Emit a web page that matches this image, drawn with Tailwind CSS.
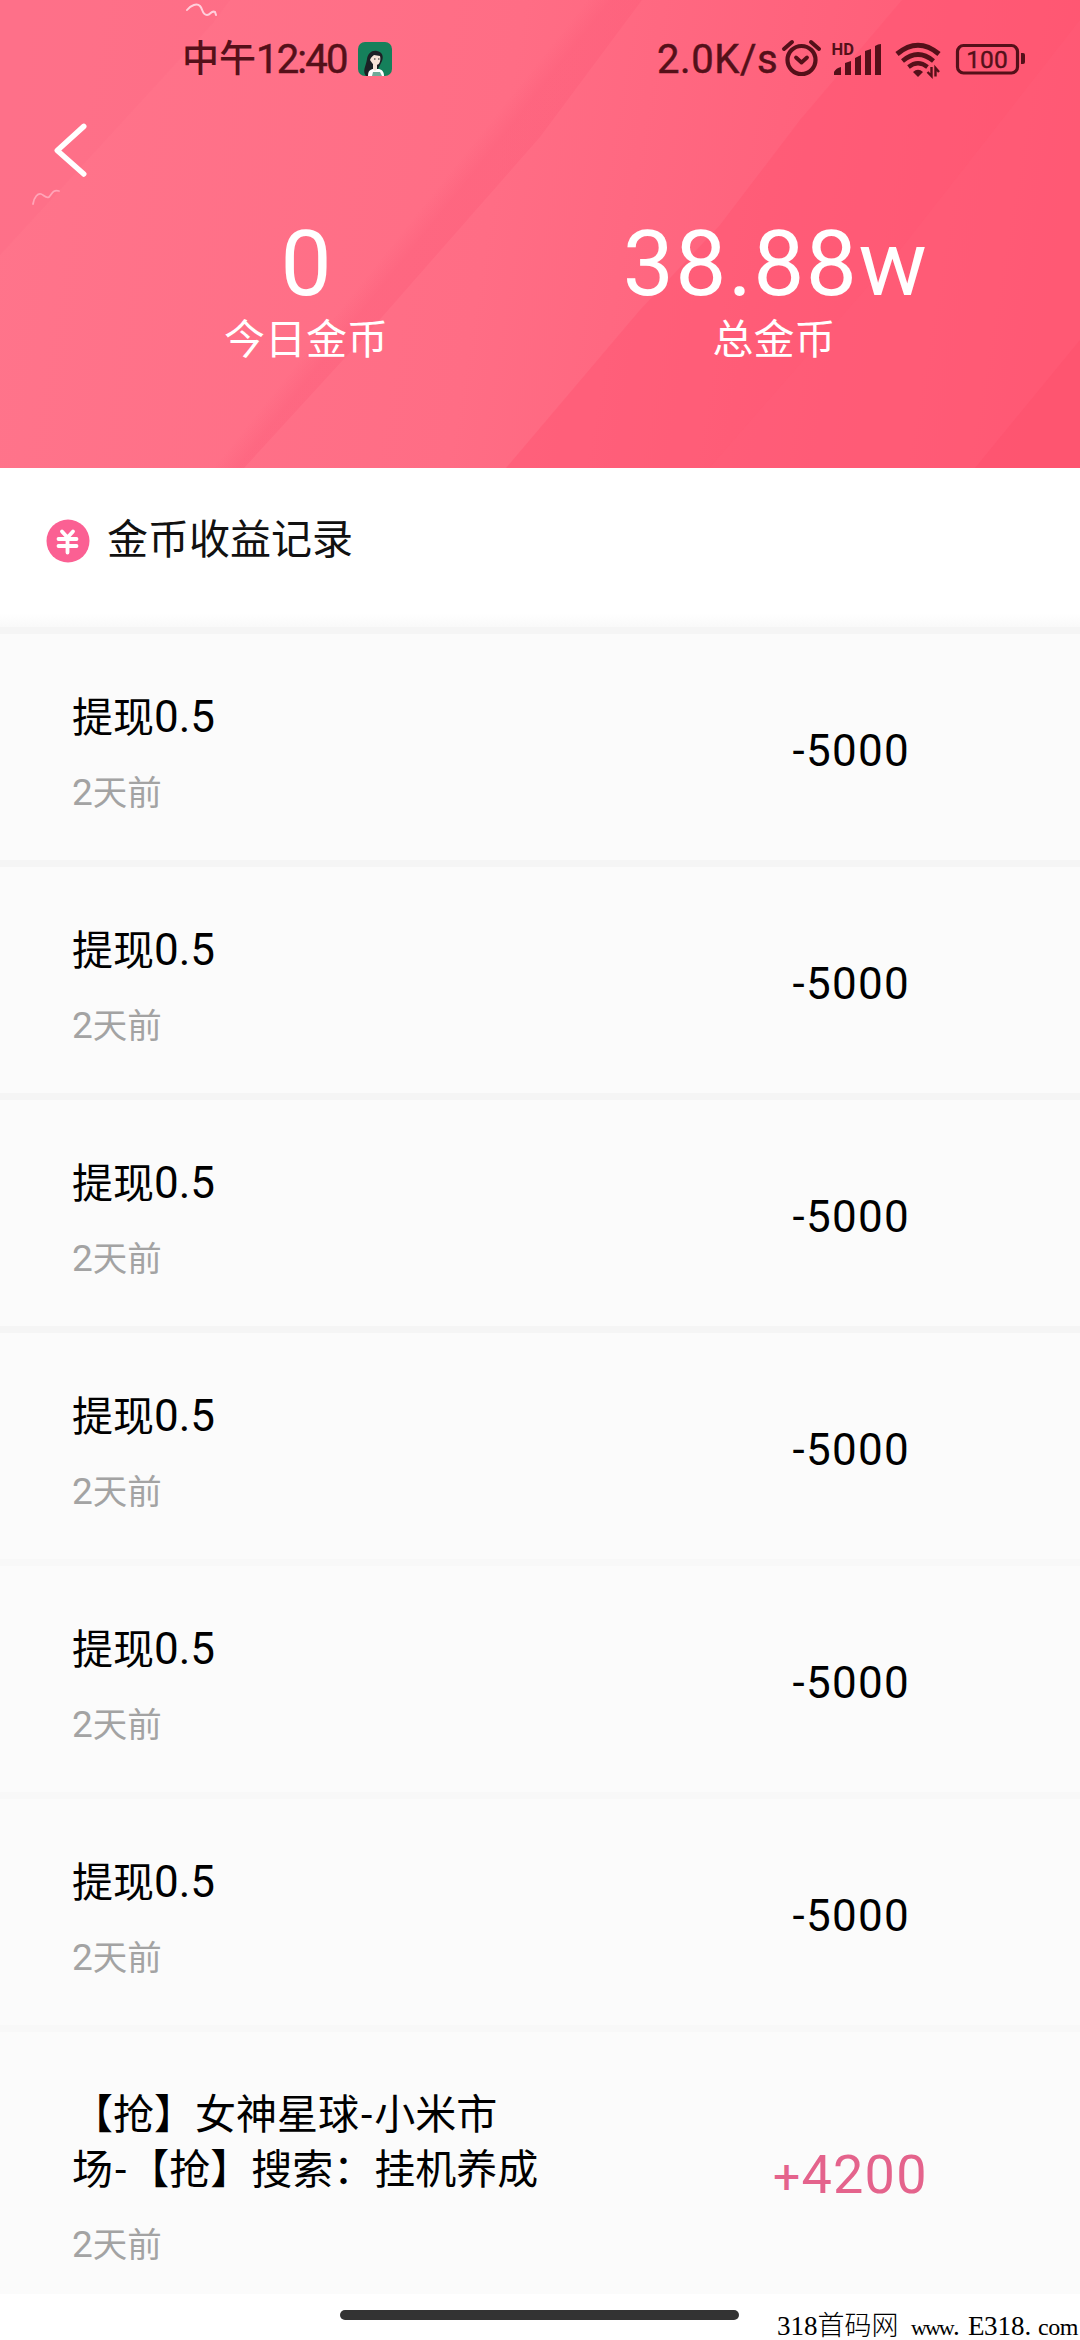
<!DOCTYPE html>
<html lang="zh-CN">
<head>
  <meta charset="UTF-8" />
  <meta name="viewport" content="width=device-width, initial-scale=1.0" />
  <title>金币收益记录</title>
  <script src="https://cdn.jsdelivr.net/npm/@tailwindcss/browser@4"></script>
</head>
<body class="bg-white w-[1080px] h-[2340px] overflow-hidden relative font-['Roboto','Noto_Sans_CJK_SC',sans-serif] text-black">

  <header class="relative h-[468px] overflow-hidden">
    <!-- background stripes -->
    <svg class="absolute inset-0" width="1080" height="468" viewBox="0 0 1080 468" fill="none">
      <defs>
        <linearGradient id="base" x1="0" y1="150" x2="1080" y2="330" gradientUnits="userSpaceOnUse">
          <stop offset="0" stop-color="#ff748b" />
          <stop offset="0.45" stop-color="#ff6d85" />
          <stop offset="0.7" stop-color="#ff637d" />
          <stop offset="1" stop-color="#ff5873" />
        </linearGradient>
        <linearGradient id="band" x1="385" y1="253" x2="410" y2="273" gradientUnits="userSpaceOnUse">
          <stop offset="0" stop-color="#fb5574" stop-opacity="0" />
          <stop offset="0.6" stop-color="#fb5574" stop-opacity="0.28" />
          <stop offset="1" stop-color="#fb5574" stop-opacity="0.28" />
        </linearGradient>
      </defs>
      <rect width="1080" height="468" fill="url(#base)" />
      <path d="M0 0H230L213 23L0 255Z" fill="#fb6480" fill-opacity="0.2" />
      <path d="M642 0L540 137L375 325L244 468H160L330 300L560 0Z" fill="url(#band)" />
      <path d="M902 0L800 120L720 225L640 310L506 468H1080V0Z" fill="#fe5571" fill-opacity="0.45" />
      <path d="M1080 20L1033 80L900 250L709 468H1080Z" fill="#ff6079" fill-opacity="0.3" />
      <path d="M1080 340L975 468H1080Z" fill="#fc4d6a" fill-opacity="0.35" />
      <path d="M187 10C191 5 197 3 200 6C203 9 202 15 207 15C211 15 211 10 215 12L216 15" stroke="#ffd0dc" stroke-width="2" stroke-linecap="round" />
      <path d="M33 204C34 197 38 193 41 194C44 195 46 199 49 197C52 194 53 189 59 191" stroke="#ffa5b8" stroke-width="1.8" stroke-linecap="round" />
    </svg>

    <!-- status bar -->
    <div class="relative flex items-center h-[118px] pl-[182px] pr-[55px] text-[#541019]">
      <span class="text-[37px] leading-none font-medium">中午</span>
      <span class="text-[40px] leading-none tracking-[-1.8px] w-[93px] pt-px [-webkit-text-stroke:0.5px_#541019]">12:40</span>
      <svg class="ml-[9px]" width="34" height="34" viewBox="0 0 34 34">
        <defs><clipPath id="app"><rect width="34" height="34" rx="7" /></clipPath></defs>
        <g clip-path="url(#app)">
          <rect width="34" height="34" fill="#15805b" />
          <path d="M8 34C4 29 8 24 9 17C10 11 14 8 19 9C24 10 26 14 24 19L20 27L13 34Z" fill="#1c2025" />
          <path d="M12 18C13 15 15 14 16 13L22 14C23 18 22 23 18 23C15 23 14 21 12 18Z" fill="#f7e4d8" />
          <path d="M10 34C10 29 12 27 16 27H21C25 28 26 31 26 34Z" fill="#fff" />
          <path d="M15 22H19V27L17 29L15 27Z" fill="#f7e4d8" />
          <path d="M14 34L15 30H22L24 34Z" fill="#70aa99" />
          <path d="M16 17H17.500M20 17H21.500" stroke="#1c2025" />
        </g>
      </svg>
      <span class="ml-auto text-[40px] leading-none tracking-[0.6px] w-[122px] pt-px [-webkit-text-stroke:0.5px_#541019]">2.0K/s</span>
      <svg width="246" height="40" viewBox="778 39 246 40" fill="none" stroke="#541019">
        <!-- alarm -->
        <circle cx="800.500" cy="60" r="14" stroke-width="4.200" />
        <path d="M783 49L791 42M818 49L810 42" stroke-width="4" stroke-linecap="round" />
        <path d="M795 57.500L800.500 62.500L806 57.500" stroke-width="3.800" stroke-linecap="round" stroke-linejoin="round" />
        <!-- signal -->
        <text x="830.500" y="55" font-size="16.500" font-weight="700" stroke="none" fill="#541019">HD</text>
        <g fill="#541019" stroke="none">
          <path d="M833 75V72Q835 68 840 67V75ZM844 75V63L850 61V75ZM854 75V58L860 55V75ZM864 75V51L870 49V75ZM874 75V46Q877 44 880 44V75Z" />
        </g>
        <!-- wifi -->
        <path d="M896 54Q917 36.500 938 54" stroke-width="5" />
        <path d="M901.500 61Q917 48 932.500 61" stroke-width="4.600" />
        <path d="M907.500 67Q917 59.500 926.500 67" stroke-width="4.200" />
        <path d="M912 72Q917 67.500 922 72L917 77Z" fill="#541019" stroke="none" />
        <path d="M930.500 67V76L926.500 72M934.500 76.500V68L938 72" stroke-width="2.400" />
        <!-- battery -->
        <rect x="956.500" y="45.500" width="60" height="27.500" rx="6" stroke-width="3.200" />
        <path d="M1020 53H1022Q1024 53 1024 55V62Q1024 64 1022 64H1020Z" fill="#541019" stroke="none" />
        <text x="986" y="68" font-size="24.500" text-anchor="middle" stroke="#541019" stroke-width="0.400" fill="#541019">100</text>
      </svg>
    </div>

    <!-- back -->
    <div class="relative h-[64px] pl-[53px]">
      <svg width="36" height="60" viewBox="0 0 36 60" fill="none" class="block pt-px">
        <path d="M31 7.500L4 32L31 56" stroke="#fff" stroke-width="5.500" stroke-linecap="round" stroke-linejoin="round" />
      </svg>
    </div>

    <!-- totals -->
    <div class="relative flex pt-[30px] pl-[72px] text-white text-center">
      <div class="w-[468px]">
        <div class="text-[91px] leading-[104px]">0</div>
        <div class="text-[41px] leading-[48px]">今日金币</div>
      </div>
      <div class="w-[468px]">
        <div class="text-[91px] leading-[104px] tracking-[1.4px] pl-[3px]">38.88w</div>
        <div class="text-[41px] leading-[48px]">总金币</div>
      </div>
    </div>
  </header>

  <section class="flex items-center h-[146px] pl-[46px] gap-[17px]">
    <svg width="44" height="44" viewBox="0 0 44 44" fill="none">
      <circle cx="22" cy="22" r="21.500" fill="#fb6093" />
      <path d="M16 12.500L21.500 18.500L27 12.500M12.500 20H30.500M12.500 27H30.500M21.500 19V33.500" stroke="#fff" stroke-width="3.800" stroke-linecap="round" stroke-linejoin="round" />
    </svg>
    <h1 class="text-[41px] leading-[55px] pb-[2px] text-[#111]">金币收益记录</h1>
  </section>
  <div class="h-[13px] bg-linear-to-b from-white to-[#f9f9f9]"></div>

  <ul id="records"></ul>

  <!-- home indicator -->
  <div class="absolute left-[340px] top-[2310px] w-[399px] h-[10px] rounded-full bg-[#333]"></div>

  <!-- site mark -->
  <div class="absolute left-[777px] top-[2312px] flex items-baseline whitespace-pre text-[27px] leading-[28px] font-['Liberation_Serif','Noto_Sans_CJK_SC',serif]">
    <span class="w-[134px] font-light">318首码网</span>
    <span class="w-[42px] text-[22px] tracking-[-2px]">www</span>
    <span class="w-[15px]">.</span>
    <span class="w-[16px]">E</span>
    <span class="w-[54px]">318.</span>
    <span class="w-[42px] text-[24px] tracking-[-0.5px]">com</span>
  </div>

  <script>
    const records = [
      ...Array.from({ length: 6 }, () => ({ title: "提现<span class='text-[44px]'>0.5</span>", time: "天前", days: 2, amount: -5000 })),
      { title: "【抢】女神星球<span class='px-[2px]'>-</span>小米市<br>场<span class='px-[2px]'>-</span>【抢】搜索：挂机养成", time: "天前", days: 2, amount: 4200 }
    ];

    const list = document.getElementById("records");

    list.innerHTML = records.map((r, i) => {
      const income = r.amount > 0;
      return `
        <li class="flex items-center border-t-[7px] ${i < 4 ? "border-[#f5f5f5]" : "border-[#f8f8f8]"} bg-[#fbfbfb] pl-[72px] ${income ? "h-[269px]" : "h-[233px]"}">
          <div class="w-[544px] whitespace-nowrap ${income ? "pt-[33px]" : "pt-[15px]"}">
            <div class="text-[41px] leading-[55px]">${r.title}</div>
            <div class="mt-[21px] text-[34.5px] leading-[52px] text-[#a3a3a3]"><span class="text-[37px]">${r.days}</span>${r.time}</div>
          </div>
          <div class="w-[470px] text-center ${income ? "text-[54px] tracking-[1.2px] text-[#e4638c] pt-[23px] pl-[8px]" : "text-[44px] tracking-[1.3px] pt-[8px] pl-[10px]"}">${income ? "<span class='text-[48px]'>+</span>" : ""}${r.amount}</div>
        </li>`;
    }).join("");
  </script>
</body>
</html>
